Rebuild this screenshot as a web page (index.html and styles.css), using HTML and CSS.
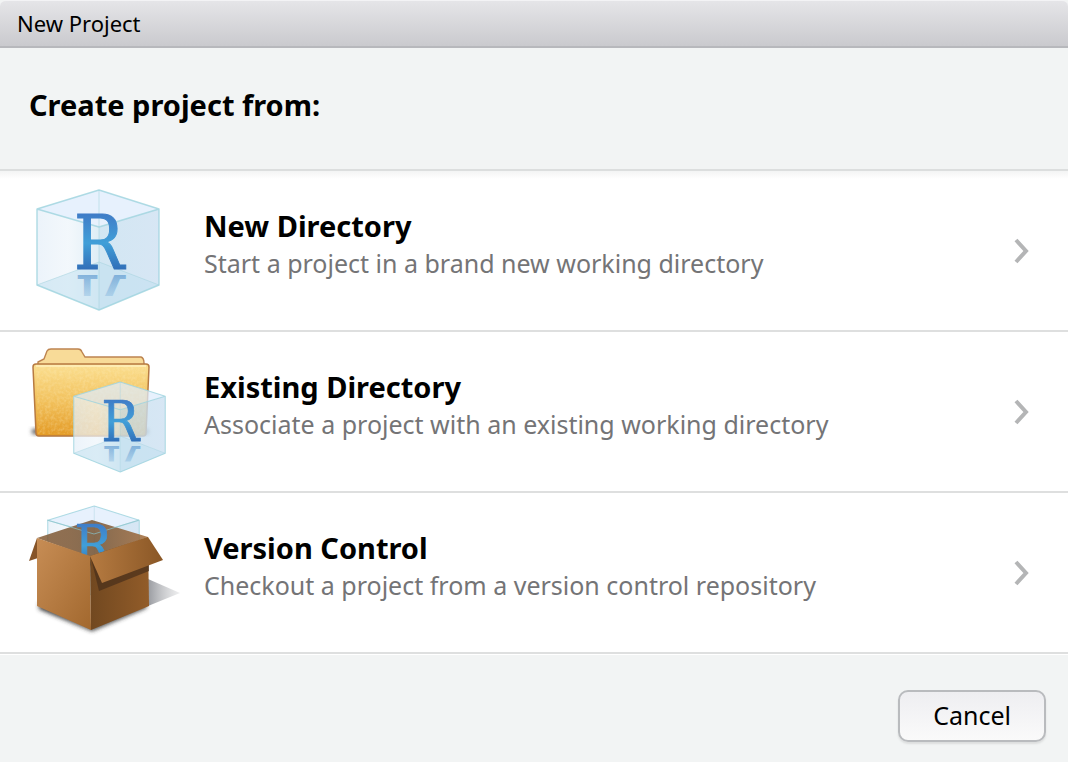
FILE: index.html
```html
<!DOCTYPE html>
<html lang="en">
<head>
<meta charset="utf-8">
<title>New Project</title>
<link rel="stylesheet" href="styles.css">
</head>
<body>
<svg class="defs" aria-hidden="true">
  <defs>
    <linearGradient id="letter" x1="0" y1="0" x2="0" y2="1">
      <stop offset="0.1" stop-color="#3f76c4"/><stop offset=".5" stop-color="#409fd8"/><stop offset=".85" stop-color="#2f68b4"/>
    </linearGradient>
    <linearGradient id="pane-left"><stop offset="0" stop-color="#e4eff8" stop-opacity=".6"/><stop offset=".5" stop-color="#eff6fa" stop-opacity=".55"/><stop offset="1" stop-color="#d3e8f2" stop-opacity=".7"/></linearGradient>
    <linearGradient id="pane-right"><stop offset="0" stop-color="#c2deee" stop-opacity=".7"/><stop offset="1" stop-color="#c5dcef" stop-opacity=".65"/></linearGradient>
    <linearGradient id="mirror" x1="0" y1="0" x2="0" y2="1"><stop offset=".45" stop-color="#6ba8d8" stop-opacity=".15"/><stop offset=".8" stop-color="#4f8fcb" stop-opacity=".6"/></linearGradient>
    <linearGradient id="folder" x1="0" y1="0" x2="0" y2="1"><stop offset="0" stop-color="#fbdf91"/><stop offset=".5" stop-color="#f2c25e"/><stop offset="1" stop-color="#e39a25"/></linearGradient>
    <linearGradient id="box-left" x1="0" y1="0" x2="1" y2="1"><stop offset="0" stop-color="#c78d55"/><stop offset="1" stop-color="#a2682e"/></linearGradient>
    <linearGradient id="box-right"><stop offset="0" stop-color="#714820"/><stop offset="1" stop-color="#925c29"/></linearGradient>
    <linearGradient id="box-flap"><stop offset="0" stop-color="#b67b41"/><stop offset="1" stop-color="#8a5726"/></linearGradient>
    <linearGradient id="box-inside"><stop offset="0" stop-color="#7c5028"/><stop offset=".5" stop-color="#6f4925"/><stop offset="1" stop-color="#9c622e"/></linearGradient>
    <linearGradient id="ground"><stop offset="0" stop-color="#999ba0"/><stop offset="1" stop-color="#dddee0" stop-opacity=".5"/></linearGradient>
    <filter id="soft" x="-20%" y="-50%" width="140%" height="200%"><feGaussianBlur stdDeviation="2"/></filter>
    <filter id="grain" x="0" y="0" width="100%" height="100%">
      <feTurbulence type="fractalNoise" baseFrequency=".35" numOctaves="2" seed="4"/>
      <feColorMatrix values="0 0 0 0 1  0 0 0 0 .9  0 0 0 0 .6  1.6 0 0 0 -.6"/>
      <feComposite in2="SourceGraphic" operator="in"/>
    </filter>
    <clipPath id="floor"><path d="M37 272H159V296H37z"/></clipPath>
    <g id="panes">
      <path d="M37 209L99 190L159 209V285L99 310L37 285z" fill="#eaf2fd" fill-opacity=".35"/>
      <path d="M37 209L99 227V310L37 285z" fill="url(#pane-left)"/>
      <path d="M159 209L99 227V310L159 285z" fill="url(#pane-right)"/>
      <path d="M37 209L99 190L159 209L99 227z" fill="#dcebfb" fill-opacity=".6"/>
      <path d="M37 285L99 262L159 285L99 310z" fill="#bfe0ef" fill-opacity=".5"/>
      <path d="M99 190V310M37 285L99 262L159 285" fill="none" stroke="#a5d3df" stroke-opacity=".55"/>
      <path d="M37 209L99 190L159 209V285L99 310L37 285V209L99 227L159 209" fill="none" stroke="#a1d5df" stroke-opacity=".85" stroke-width="1.4" stroke-linejoin="round"/>
    </g>
    <g id="initial">
      <text class="logo-letter" x="99" y="269" text-anchor="middle" fill="url(#letter)" stroke="url(#letter)">R</text>
    </g>
    <g id="cube">
      <use href="#panes"/>
      <g clip-path="url(#floor)"><text class="logo-letter" x="99" y="-275" text-anchor="middle" transform="scale(1 -1)" fill="url(#mirror)">R</text></g>
      <use href="#initial"/>
    </g>
  </defs>
</svg>
<main class="dialog">
  <div class="titlebar">New Project</div>
  <header class="heading"><h1>Create project from:</h1></header>
  <div class="choices">
    <button class="choice" type="button">
      <svg class="picture" viewBox="20 171 170 159" aria-hidden="true"><use href="#cube"/></svg>
      <span class="words"><span class="name">New Directory</span><span class="about">Start a project in a brand new working directory</span></span>
      <svg class="chevron" viewBox="0 0 20 30" aria-hidden="true"><path d="M4 4L14 15L4 26"/></svg>
    </button>
    <button class="choice" type="button">
      <svg class="picture" viewBox="20 332 170 159" aria-hidden="true">
        <path d="M32 429H148V434H32z" fill="#555" filter="url(#soft)"/>
        <path d="M38 368V362L44 359L47 351Q48 349 51 349H78Q81 349 82 352L85 357H141Q144 358 144 363V368z" fill="#f8db98" stroke="#bd8450" stroke-width="1.4"/>
        <path d="M36 364H146Q149 364 149 367L146 433Q146 436 143 436H39Q36 436 36 433L33 367Q33 364 36 364z" fill="url(#folder)" stroke="#b77a42" stroke-width="1.5"/>
        <path d="M36 365H146L144 434H38z" filter="url(#grain)" opacity=".35"/>
        <path d="M36 366H146" stroke="#fff0bd" stroke-width="1.5"/>
        <use href="#cube" transform="translate(46 239.5) scale(.75)"/>
      </svg>
      <span class="words"><span class="name">Existing Directory</span><span class="about">Associate a project with an existing working directory</span></span>
      <svg class="chevron" viewBox="0 0 20 30" aria-hidden="true"><path d="M4 4L14 15L4 26"/></svg>
    </button>
    <button class="choice" type="button">
      <svg class="picture" viewBox="20 493 170 159" aria-hidden="true">
        <path d="M148 579L180 593L148 606z" fill="url(#ground)"/>
        <path d="M39 603L91 627L147 603L146 608L92 631L39 609z" fill="#333" filter="url(#soft)"/>
        <path d="M37 538L29 561L38 558z" fill="#875529"/>
        <use href="#panes" transform="translate(20 363.5) scale(.75)"/>
        <path d="M37 538L92 520L148 537L90 557z" fill="url(#box-inside)" opacity=".8"/>
        <path d="M47 520L94 534L139 520" fill="none" stroke="#8fc4cc" stroke-opacity=".7"/>
        <use href="#initial" transform="translate(19 363.5) scale(.75)"/>
        <path d="M37 538L90 556L91 630L37 606z" fill="url(#box-left)"/>
        <path d="M90 556L148 537L149 606L91 630z" fill="url(#box-right)"/>
        <path d="M91 558L99 591L149 571V562z" fill="#4b301b" opacity=".75"/>
        <path d="M90 556L148 537L163 560L102 583z" fill="url(#box-flap)"/>
      </svg>
      <span class="words"><span class="name">Version Control</span><span class="about">Checkout a project from a version control repository</span></span>
      <svg class="chevron" viewBox="0 0 20 30" aria-hidden="true"><path d="M4 4L14 15L4 26"/></svg>
    </button>
  </div>
  <footer class="actions"><button class="cancel" type="button">Cancel</button></footer>
</main>
</body>
</html>
```
FILE: styles.css
```css
* { box-sizing: border-box; }
body { margin: 0; background: #f2f4f4; color: #000; font-family: "Noto Sans", "Open Sans", sans-serif; }
button { font-family: inherit; }
.defs { position: absolute; width: 0; height: 0; }
.dialog { display: flex; flex-direction: column; min-height: 100vh; }
.titlebar { padding: 7px 17px 8px; border-top: 1px solid #f3f3f5; border-bottom: 2px solid #b7b8bc; border-radius: 6px 6px 0 0; background: linear-gradient(#e5e5e8, #cacace); font-size: 22px; line-height: 30px; }
.heading { padding: 39px 29px 46px; border-bottom: 2px solid #dcdede; }
.heading h1 { margin: 0; font-size: 29px; line-height: 36px; }
.choices { background: linear-gradient(#f3f4f4, #fff 8px); }
.choice { display: flex; align-items: center; width: 100%; padding: 0 36px 0 20px; border: 0; border-bottom: 2px solid #dedfdf; background: none; color: inherit; text-align: left; }
.picture { flex: none; width: 170px; height: 159px; }
.words { display: flex; flex: 1; flex-direction: column; padding: 0 0 14px 14px; }
.name { font-size: 29px; font-weight: bold; line-height: 38px; }
.about { color: #747476; font-size: 25px; line-height: 36px; }
.chevron { flex: none; width: 20px; height: 30px; }
.chevron path { fill: none; stroke: #b4b5b6; stroke-width: 4; }
.logo-letter { font-family: "DejaVu Serif Condensed", "DejaVu Serif", serif; font-size: 74px; stroke-width: 1; }
.actions { display: flex; flex: 1; align-items: flex-start; justify-content: flex-end; padding: 35px 22px 20px; border-top: 1px solid #fff; }
.cancel { padding: 6px 33px 8px; border: 2px solid #b9bbbe; border-radius: 10px; background: linear-gradient(#eeeef1, #fafafa); box-shadow: 0 2px 2px #dcdede; color: #000; font-size: 25px; line-height: 34px; }
```
